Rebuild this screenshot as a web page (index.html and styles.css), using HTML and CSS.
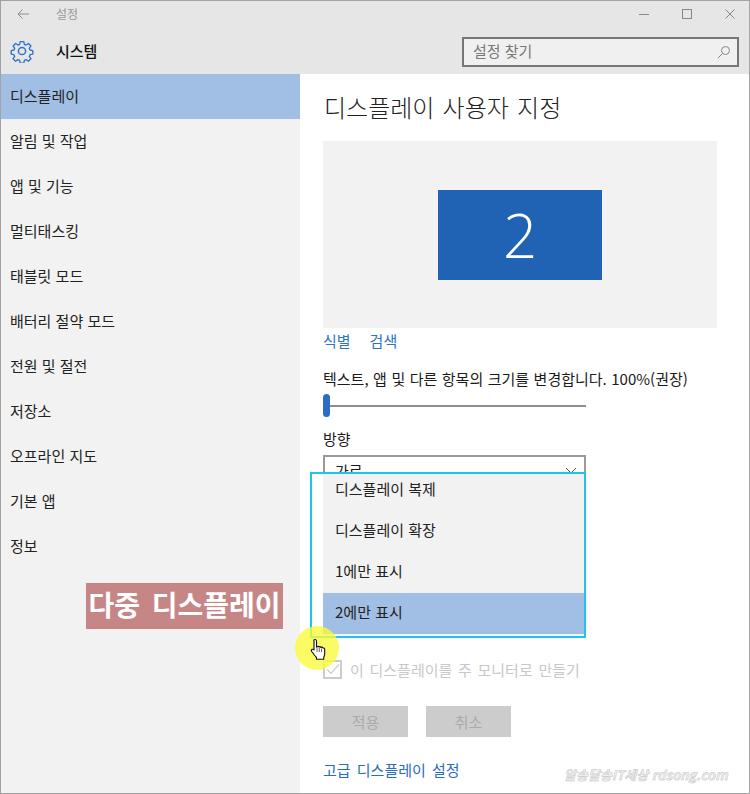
FILE: index.html
```html
<!DOCTYPE html>
<html lang="ko">
<head>
<meta charset="utf-8">
<title>설정</title>
<link rel="stylesheet" href="styles.css">
</head>
<body>
<div class="window">
  <header class="chrome">
    <div class="titlebar">
      <svg class="back" width="12" height="10" viewBox="0 0 12 10"><path d="M12 5H1M5.500 .5L1 5l4.500 4.500" fill="none" stroke="#8c8c8c" stroke-width="1"/></svg>
      <span class="apptitle">설정</span>
      <div class="winbtns">
        <svg width="10" height="10" viewBox="0 0 10 10"><path d="M0 5.500H10" stroke="#888" fill="none"/></svg>
        <svg width="10" height="10" viewBox="0 0 10 10"><rect x=".5" y=".5" width="9" height="9" stroke="#888" fill="none"/></svg>
        <svg width="10" height="10" viewBox="0 0 10 10"><path d="M.5 .5l9 9M9.500 .5l-9 9" stroke="#888" fill="none"/></svg>
      </div>
    </div>
    <div class="subbar">
      <div class="sysname">
        <svg width="24" height="24" viewBox="0 0 24 24"><path d="M10 1.500h4l.6 3.100 1.900.8 2.600-1.800 2.800 2.800-1.800 2.600.8 1.900 3.100.6v4l-3.100.6-.8 1.900 1.800 2.600-2.800 2.800-2.600-1.800-1.900.8-.6 3.100h-4l-.6-3.100-1.900-.8-2.600 1.800-2.800-2.800 1.800-2.600-.8-1.900-3.100-.6v-4l3.100-.6.8-1.900-1.800-2.600 2.800-2.800 2.600 1.800 1.900-.8z" transform="translate(1.200 1.200) scale(.9)" fill="none" stroke="#2f74c4" stroke-width="1.500" stroke-linejoin="round"/><circle cx="12" cy="12" r="3.600" fill="none" stroke="#2f74c4" stroke-width="1.500"/></svg>
        <span class="systext">시스템</span>
      </div>
      <div class="search">
        <span class="searchtext">설정 찾기</span>
        <svg width="14" height="14" viewBox="0 0 14 14"><circle cx="8.500" cy="5.500" r="4" fill="none" stroke="#888"/><path d="M5.500 8.500L1 13" stroke="#888" fill="none"/></svg>
      </div>
    </div>
  </header>
  <div class="body">
    <nav class="side">
      <a class="navitem active">디스플레이</a>
      <a class="navitem">알림 및 작업</a>
      <a class="navitem">앱 및 기능</a>
      <a class="navitem">멀티태스킹</a>
      <a class="navitem">태블릿 모드</a>
      <a class="navitem">배터리 절약 모드</a>
      <a class="navitem">전원 및 절전</a>
      <a class="navitem">저장소</a>
      <a class="navitem">오프라인 지도</a>
      <a class="navitem">기본 앱</a>
      <a class="navitem">정보</a>
    </nav>
    <main class="content">
      <h1>디스플레이 사용자 지정</h1>
      <div class="preview"><div class="monitor">2</div></div>
      <div class="links"><a>식별</a><a>검색</a></div>
      <p class="scale">텍스트, 앱 및 다른 항목의 크기를 변경합니다. 100%(권장)</p>
      <div class="slider"><span class="thumb"></span></div>
      <p class="orient">방향</p>
      <div class="select">
        <span>가로</span>
        <svg width="12" height="8" viewBox="0 0 12 8"><path d="M1 1l5 5 5-5" fill="none" stroke="#555"/></svg>
      </div>
      <label class="check">
        <svg width="19" height="19" viewBox="0 0 19 19"><rect x="1" y="1" width="17" height="17" fill="#fff" stroke="#ccc" stroke-width="2"/><path d="M4 9.500l4 4 8-9" fill="none" stroke="#ccc" stroke-width="1.200"/></svg>
        <span>이 디스플레이를 주 모니터로 만들기</span>
      </label>
      <div class="buttons"><button>적용</button><button>취소</button></div>
      <a class="advanced">고급 디스플레이 설정</a>
    </main>
  </div>
</div>
<div class="menuframe">
  <ul class="menu">
    <li>디스플레이 복제</li>
    <li>디스플레이 확장</li>
    <li>1에만 표시</li>
    <li class="selected">2에만 표시</li>
  </ul>
</div>
<div class="caption">다중 디스플레이</div>
<div class="halo"></div>
<svg class="hand" width="18" height="24" viewBox="0 0 18 24"><path d="M5 1.500c1 0 1.500.7 1.500 1.600V9l.5-.4c.8-.5 1.600-.3 2 .3.800-.4 1.600-.2 2 .5.800-.4 1.700-.1 2.100.7.800-.2 1.600.3 1.600 1.300v4.600c0 1.500-.6 2.300-1 3.500v1.800H6.500v-1.800C5 18 3.500 16 1.700 13.500c-.7-1-.3-1.900.4-2.200.7-.3 1.300 0 1.900.7V3.100C3.500 2.200 4 1.500 5 1.500z" fill="#fff" stroke="#111" stroke-width="1.100" stroke-linejoin="round"/><path d="M7 9v5M9.300 9.500V14M11.500 10.500V14" stroke="#444" stroke-width=".8" fill="none"/></svg>
<div class="watermark">알송달송IT세상 rdsong.com</div>
</body>
</html>
```
FILE: styles.css
```css
* { box-sizing: border-box; }
html, body { margin: 0; padding: 0; }
body {
  width: 750px;
  height: 794px;
  position: relative;
  overflow: hidden;
  font-family: "Noto Sans CJK KR", "Noto Sans", sans-serif;
  color: #1a1a1a;
  background: #fff;
}
.window {
  width: 750px;
  height: 794px;
  border: 1px solid #a3a3a3;
  display: flex;
  flex-direction: column;
}
.chrome { height: 73px; background: #e6e6e6; flex: none; }
.titlebar {
  height: 25px;
  display: flex;
  align-items: center;
  padding-left: 16px;
}
.back { margin-right: 27px; }
.apptitle { font-size: 12px; color: #999; }
.winbtns {
  margin-left: auto;
  display: flex;
  gap: 33px;
  padding-right: 14px;
}
.subbar {
  height: 48px;
  display: flex;
  align-items: center;
  justify-content: space-between;
  padding: 2px 10px 0 9px;
}
.sysname { display: flex; align-items: center; gap: 22px; }
.systext { font-size: 15px; font-weight: 500; color: #111; line-height: 22px; padding-bottom: 1px; }
.search {
  width: 277px;
  height: 30px;
  margin-top: 1px;
  border: 2px solid #767676;
  background: #f0f0f0;
  display: flex;
  align-items: center;
  justify-content: space-between;
  padding: 0 6px 0 9px;
  font-size: 15px;
  color: #777;
}
.searchtext { line-height: 22px; padding-bottom: 2px; }
.body { flex: 1; display: flex; min-height: 0; }
.side { width: 299px; flex: none; background: #f2f2f2; }
.navitem {
  display: block;
  height: 45px;
  line-height: 43px;
  padding-left: 9px;
  font-size: 15px;
  color: #222;
}
.navitem.active { background: #a1bfe4; }
.content { flex: 1; padding: 0 0 0 23px; }
h1 {
  margin: 16px 0 0 1px;
  font-size: 24px;
  line-height: 34px;
  font-weight: 300;
  word-spacing: 1.500px;
  color: #222;
}
.preview {
  width: 394px;
  height: 187px;
  margin-top: 17px;
  background: #f2f2f2;
  display: flex;
  align-items: center;
  justify-content: center;
}
.monitor {
  width: 164px;
  height: 90px;
  background: #2063b5;
  color: #fff;
  font-family: "Open Sans", sans-serif;
  font-weight: 300;
  font-size: 60px;
  line-height: 90px;
  text-align: center;
}
.links {
  display: flex;
  gap: 19px;
  margin-top: 2px;
  font-size: 15px;
  line-height: 22px;
  color: #2f74c4;
}
.scale {
  margin: 16px 0 0;
  font-size: 15px;
  line-height: 22px;
  word-spacing: .3px;
  white-space: nowrap;
}
.slider {
  width: 263px;
  height: 23px;
  margin-top: 4px;
  position: relative;
  display: flex;
  align-items: center;
}
.slider::before { content: ""; flex: 1; height: 2px; background: #8f8f8f; }
.thumb {
  position: absolute;
  left: 0;
  top: 0;
  width: 7px;
  height: 23px;
  border-radius: 4px;
  background: #2b6cc4;
}
.orient { margin: 11px 0 0; font-size: 15px; line-height: 22px; }
.select {
  width: 263px;
  height: 32px;
  margin-top: 5px;
  border: 2px solid #9a9a9a;
  display: flex;
  align-items: center;
  justify-content: space-between;
  padding: 0 7px 0 10px;
  font-size: 15px;
  line-height: 24px;
}
.check {
  display: flex;
  align-items: center;
  gap: 8px;
  margin-top: 171px;
  height: 22px;
  font-size: 15px;
  word-spacing: 1.500px;
  color: #c8c8c8;
}
.buttons { display: flex; gap: 18px; margin-top: 26px; }
.buttons button {
  width: 85px;
  height: 31px;
  border: 0;
  padding: 0;
  background: #ccc;
  font: inherit;
  font-size: 15px;
  color: #aaa;
}
.advanced {
  display: block;
  margin-top: 22px;
  font-size: 15px;
  line-height: 22px;
  word-spacing: 2px;
  color: #2a6cc0;
}
.menuframe {
  position: absolute;
  left: 310px;
  top: 472px;
  width: 276px;
  height: 166px;
  border: 2px solid #1cc4ee;
  background: #fff;
  padding: 0 0 1px 11px;
}
.menu {
  list-style: none;
  margin: 0;
  padding: 0;
  background: #f2f2f2;
  height: 161px;
}
.menu li {
  height: 41px;
  line-height: 30px;
  padding-left: 12px;
  font-size: 15px;
  color: #222;
}
.menu li.selected { height: 41px; margin-top: -4px; line-height: 38px; background: #a1bfe4; }
.caption {
  position: absolute;
  left: 86px;
  top: 583px;
  width: 197px;
  height: 46px;
  background: #c78686;
  color: #fff;
  font-size: 28px;
  font-weight: 700;
  word-spacing: 4px;
  line-height: 42px;
  text-align: center;
  white-space: nowrap;
}
.halo {
  position: absolute;
  left: 295px;
  top: 626px;
  width: 44px;
  height: 44px;
  border-radius: 50%;
  background: rgba(250, 250, 60, .8);
}
.hand { position: absolute; left: 310px; top: 638px; }
.watermark {
  position: absolute;
  left: 564px;
  top: 766px;
  font-size: 13px;
  font-weight: 700;
  font-style: italic;
  line-height: 18px;
  color: #eee;
  -webkit-text-stroke: .4px #bbb;
  white-space: nowrap;
}
```
